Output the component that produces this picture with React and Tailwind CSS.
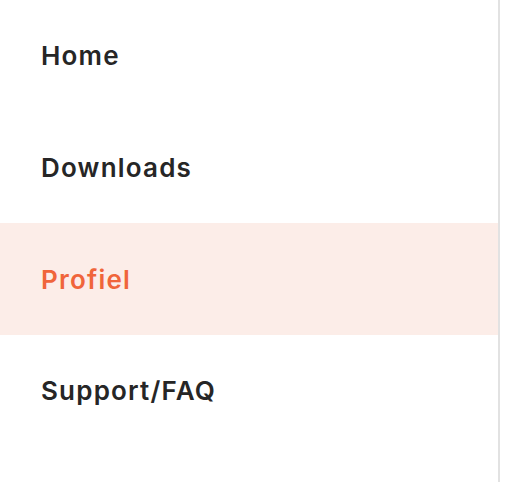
const items = [
  { label: 'Home' },
  { label: 'Downloads' },
  { label: 'Profiel', active: true },
  { label: 'Support/FAQ' },
]

export default function App() {
  return (
    <div className="h-[482px] w-[518px] bg-white" style={{ fontFamily: 'Inter, "Noto Sans", sans-serif' }}>
      <nav className="h-full w-[500px] border-r-2 border-[#e2e2e2]">
        {items.map(it => (
          <a
            key={it.label}
            href="#"
            className={`flex h-[111.7px] items-center pl-[41px] text-[26px] font-semibold tracking-[1.2px] ${
              it.active ? 'bg-[#fcede8] text-[#f0653b]' : 'text-[#262626]'
            }`}
          >
            {it.label}
          </a>
        ))}
      </nav>
    </div>
  )
}
